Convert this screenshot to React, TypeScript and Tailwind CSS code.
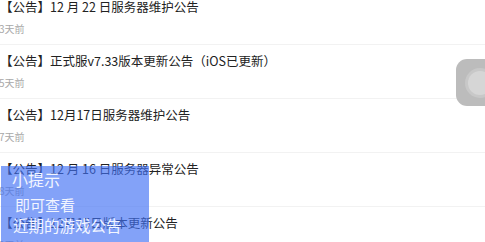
const notices = [
  { title: '【公告】12 月 22 日服务器维护公告', time: '3天前' },
  { title: '【公告】正式服v7.33版本更新公告（iOS已更新）', time: '5天前' },
  { title: '【公告】12月17日服务器维护公告', time: '7天前' },
  { title: '【公告】12 月 16 日服务器异常公告', time: '8天前' },
  { title: '【公告】12月15日版本更新公告', time: '9天前' },
];

export default function App() {
  return (
    <div
      className="relative h-[242px] w-[485px] overflow-hidden bg-white"
      style={{ fontFamily: '"Noto Sans CJK SC", "Noto Sans", sans-serif' }}
    >
      <ul className="-mt-[9px]">
        {notices.map((n) => (
          <li key={n.title} className="border-b border-[#f2f2f2] pt-2 pb-[9px]">
            <p className="text-[12.5px] leading-4 text-[#222]">{n.title}</p>
            <p className="mt-2 -ml-px text-[10px] leading-3 text-[#a8a8a8]">{n.time}</p>
          </li>
        ))}
      </ul>

      {/* floating assistive button */}
      <div className="absolute left-[456px] top-[59px] flex h-[47px] w-[48px] items-center justify-center rounded-[11px] bg-[#bcbcbc]">
        <div className="flex h-[30px] w-[30px] items-center justify-center rounded-full bg-[#c8c8c8]">
          <div className="h-[24px] w-[24px] rounded-full bg-[#d6d6d6]" />
        </div>
      </div>

      {/* tip overlay */}
      <div className="absolute left-px top-[166px] h-[76px] w-[148px] bg-[rgba(64,112,245,0.65)] text-[#f2f5ff]">
        <p className="ml-[11px] mt-[3px] text-[16px] leading-5">小提示</p>
        <p className="ml-[14px] mt-[6px] text-[15px] leading-5">即可查看</p>
        <p className="ml-[12px] text-[15.5px] leading-5">近期的游戏公告</p>
      </div>
    </div>
  );
}
